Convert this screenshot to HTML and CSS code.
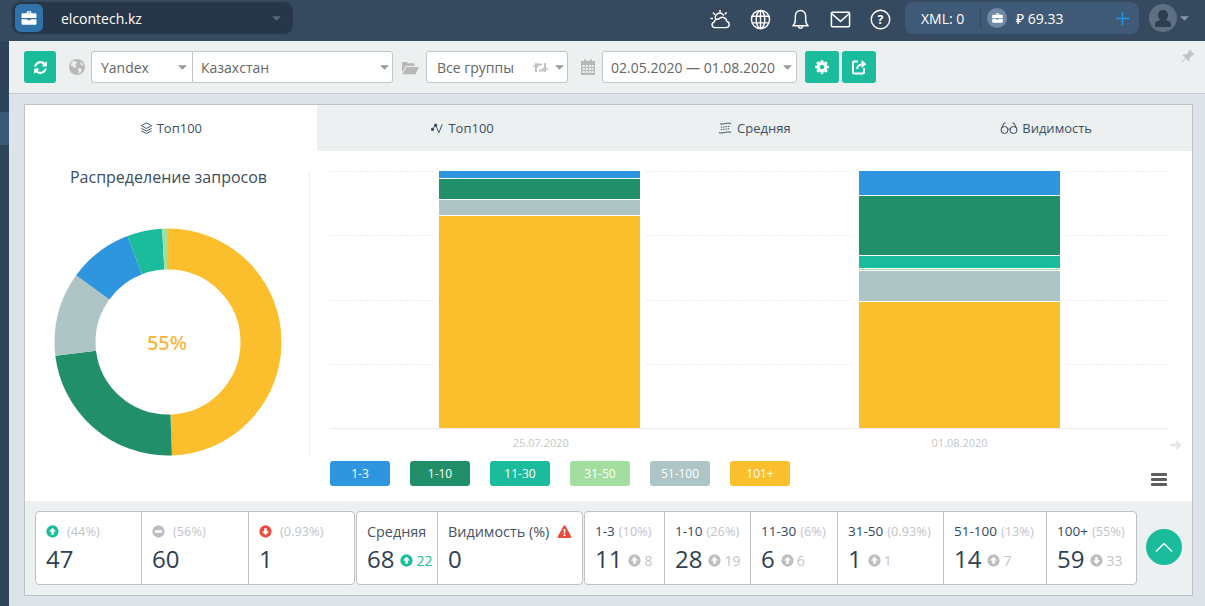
FILE: index.html
```html
<!DOCTYPE html>
<html lang="ru">
<head>
<meta charset="utf-8">
<title>elcontech.kz</title>
<link rel="stylesheet" href="styles.css">
</head>
<body>
<svg class="sprite" aria-hidden="true">
  <symbol id="c-up" viewBox="0 0 14 14"><circle cx="7" cy="7" r="6.6" fill="currentColor"/><path d="M7 3 3.2 7h2.4v3.6h2.8V7h2.4z" fill="#fff"/></symbol>
  <symbol id="c-down" viewBox="0 0 14 14"><circle cx="7" cy="7" r="6.6" fill="currentColor"/><path d="M7 11 3.2 7h2.4V3.4h2.8V7h2.4z" fill="#fff"/></symbol>
  <symbol id="c-minus" viewBox="0 0 14 14"><circle cx="7" cy="7" r="6.6" fill="currentColor"/><rect x="3.2" y="5.6" width="7.6" height="2.8" fill="#fff"/></symbol>
  <symbol id="case" viewBox="0 0 20 18"><path d="M7 3V1.6C7 .9 7.6.4 8.2.4h3.6c.6 0 1.2.5 1.2 1.2V3h5c.9 0 1.6.7 1.6 1.6V9H.4V4.6C.4 3.700 1.100 3 2 3zm1.500 0h3V1.900h-3zM.4 10.500h7.600V12h4v-1.500h7.600v5.500c0 .9-.7 1.600-1.600 1.600H2c-.9 0-1.600-.7-1.600-1.600z" fill="currentColor"/></symbol>
  <symbol id="caret" viewBox="0 0 10 5"><path d="M0 0h10L5 5z" fill="currentColor"/></symbol>
</svg>

<header class="topbar">
  <div class="account">
    <span class="account-logo"><svg class="i-case"><use href="#case"/></svg></span>
    <span class="account-name">elcontech.kz</span>
    <svg class="caret caret-dim"><use href="#caret"/></svg>
  </div>
  <nav class="top-icons">
    <svg class="ti" viewBox="0 0 22 22" fill="none" stroke="#fff" stroke-width="1.5" stroke-linecap="round" stroke-linejoin="round"><path d="M5.500 19.500h11.500a3.300 3.300 0 0 0 .6-6.500 4.600 4.600 0 0 0-8.400-2.300 3.700 3.700 0 0 0-4.900 3.100 2.900 2.900 0 0 0 .7 5.700z"/><path d="M5.800 10.300a4.600 4.600 0 0 1 8.200-3.900M10.500 1.500v1.800M3.500 4.200l1.300 1.300M17 4l-1.200 1.300M1 10h1.600"/></svg>
    <svg class="ti" viewBox="0 0 22 22" fill="none" stroke="#fff" stroke-width="1.500"><circle cx="11" cy="11" r="9.500"/><ellipse cx="11" cy="11" rx="4.500" ry="9.500"/><path d="M11 1.500v19M2.200 7.500h17.600M2.200 14.500h17.600"/></svg>
    <svg class="ti" viewBox="0 0 22 22" fill="none" stroke="#fff" stroke-width="1.500" stroke-linejoin="round"><path d="M3 17.500c1.500-1.200 2.600-2.800 2.600-6.500V7a5.400 5.400 0 0 1 10.800 0v4c0 3.700 1.100 5.300 2.600 6.500z"/><path d="M9 18a2 2 0 0 0 4 0"/></svg>
    <svg class="ti" viewBox="0 0 22 22" fill="none" stroke="#fff" stroke-width="1.600" stroke-linejoin="round"><rect x="1.500" y="3.500" width="19" height="15" rx="1"/><path d="m2 5 9 8 9-8"/></svg>
    <svg class="ti" viewBox="0 0 22 22"><circle cx="11" cy="11" r="9.700" fill="none" stroke="#fff" stroke-width="1.500"/><text x="11" y="15.500" text-anchor="middle" class="q-mark">?</text></svg>
  </nav>
  <div class="balance">
    <span class="xml">XML: 0</span>
    <span class="balance-sep"></span>
    <span class="balance-icon"><svg class="i-case-small"><use href="#case"/></svg></span>
    <span class="rub">₽ 69.33</span>
    <svg class="plus" viewBox="0 0 13 13"><path d="M6.500 0v13M0 6.500h13" stroke="#2196e8" stroke-width="1.500"/></svg>
  </div>
  <div class="avatar">
    <svg viewBox="0 0 28 28" class="avatar-pic"><circle cx="14" cy="14" r="14" fill="#5e6f84"/><path d="M14 6c3 0 5 2.300 5 5.400 0 2-.9 3.700-2.200 4.700 3 .7 5.200 2 5.200 4.200V23H6v-2.700c0-2.200 2.200-3.500 5.200-4.200A5.800 5.800 0 0 1 9 11.400C9 8.300 11 6 14 6z" fill="#2c3e50"/></svg>
    <svg class="caret caret-avatar"><use href="#caret"/></svg>
  </div>
</header>

<div class="shell">
  <aside class="rail"><span class="rail-top"></span><span class="rail-active"></span></aside>
  <main class="main">
    <section class="toolbar">
      <button class="btn btn-first" type="button"><svg class="btn-i" viewBox="0 0 1792 1792"><path fill="#fff" d="M1639 1056q0 5-1 7-64 268-268 434.500t-478 166.500q-146 0-282.500-55t-243.500-157l-129 129q-19 19-45 19t-45-19-19-45v-448q0-26 19-45t45-19h448q26 0 45 19t19 45-19 45l-137 137q71 66 161 102t187 36q134 0 250-65t186-179q11-17 53-117 8-23 30-23h192q13 0 22.500 9.500t9.500 22.500zm25-800v448q0 26-19 45t-45 19h-448q-26 0-45-19t-19-45 19-45l138-138q-148-137-349-137-134 0-250 65t-186 179q-11 17-53 117-8 23-30 23h-199q-13 0-22.500-9.500t-9.500-22.500v-7q65-268 270-434.500t480-166.500q146 0 284 55.500t245 156.500l130-129q19-19 45-19t45 19 19 45z"/></svg></button>
      <svg class="tool-i i-globe" viewBox="0 0 16 16"><circle cx="8" cy="8" r="8" fill="#b8b8b8"/><path d="M3 2.500 6.500 2 8 3.500 6.500 5.500 7.500 7 5.500 9.500 3.500 7 1.500 6.500zM9 9l3 .5 1 1.500-2 3.500-1.500-1zM11 2.500l2.500 2 .5 2.500-2-1z" fill="#ececec"/></svg>
      <div class="select-group">
        <div class="select sel-engine"><span>Yandex</span><svg class="caret caret-sel"><use href="#caret"/></svg></div>
        <div class="select sel-region"><span>Казахстан</span><svg class="caret caret-sel"><use href="#caret"/></svg></div>
      </div>
      <svg class="tool-i i-folder" viewBox="0 0 18 14"><path d="M0 12V2c0-.8.600-1.400 1.300-1.400h3.500c.7 0 1.200.6 1.200 1.400h6c.8 0 1.300.6 1.300 1.400V5H4L0 12z" fill="#b8b8b8"/><path d="M4.600 6H18l-3.600 7.500H.6z" fill="#b8b8b8"/></svg>
      <div class="select sel-group">
        <span>Все группы</span>
        <svg class="i-retweet" viewBox="0 0 15 11" fill="none" stroke="#c2c2c2" stroke-width="2"><path d="M3 10V2.500h6M12 1v7.500H6"/><path d="M.5 5 3 2l2.500 3M9.500 6l2.500 3 2.500-3" stroke-width="1.500"/></svg>
        <svg class="caret caret-sel"><use href="#caret"/></svg>
      </div>
      <svg class="tool-i i-cal" viewBox="0 0 14 16"><path d="M1 2h2V.5h2V2h4V.5h2V2h2c.6 0 1 .4 1 1v12c0 .6-.4 1-1 1H1c-.6 0-1-.4-1-1V3c0-.6.4-1 1-1z" fill="#b8b8b8"/><path d="M1.500 6h2.300v2H1.500zM4.700 6H7v2H4.700zM8 6h2.300v2H8zM11 6h1.500v2H11zM1.500 9h2.300v2H1.500zM4.700 9H7v2H4.700zM8 9h2.300v2H8zM11 9h1.500v2H11zM1.500 12h2.300v2H1.500zM4.700 12H7v2H4.700zM8 12h2.300v2H8zM11 12h1.500v2H11z" fill="#ecf0f1"/></svg>
      <div class="select sel-date"><span>02.05.2020 — 01.08.2020</span><svg class="caret caret-sel"><use href="#caret"/></svg></div>
      <button class="btn btn-gear" type="button"><svg class="btn-i-gear" viewBox="0 0 1792 1792"><path fill="#fff" d="M1152 896q0-106-75-181t-181-75-181 75-75 181 75 181 181 75 181-75 75-181zm512-109v222q0 12-8 23t-20 13l-185 28q-19 54-39 91 35 50 107 138 10 12 10 25t-9 23q-27 37-99 108t-94 71q-12 0-26-9l-138-108q-44 23-91 38-16 136-29 186-7 28-36 28h-222q-14 0-24.500-8.500t-11.500-21.500l-28-184q-49-16-90-37l-141 107q-10 9-25 9-14 0-25-11-126-114-165-168-7-10-7-23 0-12 8-23 15-21 51-66.500t54-70.500q-27-50-41-99l-183-27q-13-2-21-12.500t-8-23.500v-222q0-12 8-23t19-13l186-28q14-46 39-92-40-57-107-138-10-12-10-24 0-10 9-23 26-36 98.500-107.500t94.500-71.500q13 0 26 10l138 107q44-23 91-38 16-136 29-186 7-28 36-28h222q14 0 24.500 8.500t11.500 21.500l28 184q49 16 90 37l142-107q9-9 24-9 13 0 25 10 129 119 165 170 7 8 7 22 0 12-8 23-15 21-51 66.500t-54 70.500q26 50 41 98l183 28q13 2 21 12.500t8 23.500z"/></svg></button>
      <button class="btn btn-export" type="button"><svg class="btn-i-lg" viewBox="0 0 16 16" fill="none" stroke="#fff" stroke-width="2"><path d="M7 2.500H3a1 1 0 0 0-1 1v10a1 1 0 0 0 1 1h9a1 1 0 0 0 1-1V9"/><path d="M6 10c.4-2.800 2.500-4.500 6-4.700" stroke-width="2"/><path d="M10.500 1 15.500 5l-5 4z" fill="#fff" stroke="none"/></svg></button>
      <svg class="i-pin" viewBox="0 0 14 14"><path d="M8.500.5 13.500 5.500 12.500 6.500 11.500 6 8.500 9l.3 2.500-1 1L5 9.700 1 13.500.5 13 4.300 9 1.500 6.200l1-1L5 5.500 8 2.500 7.500 1.500z" fill="#bfc5c9"/></svg>
    </section>

    <section class="panel">
      <div class="tabs">
        <div class="tab tab-active"><svg class="tab-i" viewBox="0 0 14 14" fill="none" stroke="#34495e" stroke-width="1"><path d="M7 1 1.500 4 7 7l5.500-3z"/><path d="M1.500 6.800 7 9.800l5.500-3M1.500 9.500 7 12.500l5.500-3"/></svg>Топ100</div>
        <div class="tab"><svg class="tab-i" viewBox="0 0 14 14" fill="none" stroke="#34495e" stroke-width="1"><path d="M1.500 8 5 3.500 8.500 11.500 12 2.500"/><circle cx="1.600" cy="8" r="1.300" fill="#34495e"/><circle cx="5" cy="3.500" r="1.300" fill="#34495e"/></svg>Топ100</div>
        <div class="tab"><svg class="tab-i tab-i-wide" viewBox="0 0 16 14" fill="none" stroke="#34495e" stroke-width="1"><path d="M2 2.500c3 1.500 7-1.500 12-.5" /><path d="M3 6c3 .5 6-1 10-.5" stroke-dasharray="1.500 1"/><path d="M3 8.500c3 .5 6-1 10-.5" stroke-dasharray="1.500 1"/><path d="M1 12c4 1.500 8-2 13-.5"/></svg>Средняя</div>
        <div class="tab"><svg class="tab-i tab-i-glass" viewBox="0 0 18 14" fill="none" stroke="#34495e" stroke-width="1"><circle cx="4.500" cy="9" r="3.500"/><circle cx="13.500" cy="9" r="3.500"/><path d="M8 8.500c.6-.6 1.400-.6 2 0M1.200 8 4 2h1.500M16.800 8 14 2h-1.500"/></svg>Видимость</div>
      </div>

      <div class="chart-area">
        <div class="donut-col">
          <h2 class="donut-title">Распределение запросов</h2>
          <div class="donut-wrap">
            <svg class="donut" viewBox="0 0 228 228" fill="none" stroke-width="41">
              <g transform="rotate(-90 114 114)">
                <circle cx="114" cy="114" r="93" pathLength="360" stroke="#fbbe2c" stroke-dasharray="178 182"/>
                <circle cx="114" cy="114" r="93" pathLength="360" stroke="#21906a" stroke-dasharray="85 275" stroke-dashoffset="-178"/>
                <circle cx="114" cy="114" r="93" pathLength="360" stroke="#aec5c5" stroke-dasharray="43 317" stroke-dashoffset="-263"/>
                <circle cx="114" cy="114" r="93" pathLength="360" stroke="#2e95df" stroke-dasharray="33 327" stroke-dashoffset="-306"/>
                <circle cx="114" cy="114" r="93" pathLength="360" stroke="#1abc9c" stroke-dasharray="18 342" stroke-dashoffset="-339"/>
                <circle cx="114" cy="114" r="93" pathLength="360" stroke="#a3de9e" stroke-dasharray="3 357" stroke-dashoffset="-357"/>
              </g>
            </svg>
            <span class="donut-value">55%</span>
          </div>
        </div>
        <div class="bars-col">
          <div class="plot">
            <div class="gridlines"><i></i><i></i><i></i><i></i></div>
            <div class="bar">
              <span class="seg c-blue" style="height:7px"></span>
              <span class="seg c-green" style="height:20px"></span>
              <span class="seg c-grey" style="height:15px"></span>
              <span class="seg c-yellow" style="height:212px"></span>
            </div>
            <div class="bar">
              <span class="seg c-blue" style="height:24px"></span>
              <span class="seg c-green" style="height:59px"></span>
              <span class="seg c-teal" style="height:12px"></span>
              <span class="seg c-light" style="height:1px"></span>
              <span class="seg c-grey" style="height:30px"></span>
              <span class="seg c-yellow" style="height:126px"></span>
            </div>
          </div>
          <div class="x-labels"><span>25.07.2020</span><span>01.08.2020</span>
            <svg class="x-arrow" viewBox="0 0 12 12"><path d="M6.500 1 11.500 6l-5 5-1.500-1.500L7 7.200H.5V4.800H7L5 2.500z" fill="#e4e6e8"/></svg>
          </div>
          <div class="legend-row">
            <div class="legend">
              <span class="leg c-blue">1-3</span>
              <span class="leg c-green">1-10</span>
              <span class="leg c-teal">11-30</span>
              <span class="leg c-light">31-50</span>
              <span class="leg c-grey">51-100</span>
              <span class="leg c-yellow">101+</span>
            </div>
            <div class="burger"><i></i><i></i><i></i></div>
          </div>
        </div>
      </div>

      <div class="stats">
        <div class="card card-a">
          <div class="cell"><div class="st-label"><svg class="ci ci-first green"><use href="#c-up"/></svg><span class="pct">(44%)</span></div><div class="st-num">47</div></div>
          <div class="cell"><div class="st-label"><svg class="ci ci-first silver"><use href="#c-minus"/></svg><span class="pct">(56%)</span></div><div class="st-num">60</div></div>
          <div class="cell"><div class="st-label"><svg class="ci ci-first red"><use href="#c-down"/></svg><span class="pct">(0.93%)</span></div><div class="st-num">1</div></div>
        </div>
        <div class="card card-b">
          <div class="cell"><div class="st-label st-text">Средняя</div><div class="st-num">68<svg class="ci green"><use href="#c-up"/></svg><span class="delta delta-green">22</span></div></div>
          <div class="cell"><div class="st-label st-text">Видимость (%)<svg class="warn" viewBox="0 0 14 13"><path d="M7 .3c.4 0 .7.2.9.5l5.900 10.600c.4.700-.1 1.500-.9 1.500H1.100c-.8 0-1.300-.8-.9-1.500L6.100.8C6.300.5 6.600.3 7 .3z" fill="#e74c3c"/><path d="M6.100 4h1.800l-.2 4.500H6.300zM6.100 9.400h1.800v1.700H6.100z" fill="#fff"/></svg></div><div class="st-num">0</div></div>
        </div>
        <div class="card card-c">
          <div class="cell"><div class="st-label"><b>1-3</b> <span class="pct">(10%)</span></div><div class="st-num">11<svg class="ci silver"><use href="#c-up"/></svg><span class="delta">8</span></div></div>
          <div class="cell"><div class="st-label"><b>1-10</b> <span class="pct">(26%)</span></div><div class="st-num">28<svg class="ci silver"><use href="#c-up"/></svg><span class="delta">19</span></div></div>
          <div class="cell"><div class="st-label"><b>11-30</b> <span class="pct">(6%)</span></div><div class="st-num">6<svg class="ci silver"><use href="#c-up"/></svg><span class="delta">6</span></div></div>
          <div class="cell"><div class="st-label"><b>31-50</b> <span class="pct">(0.93%)</span></div><div class="st-num">1<svg class="ci silver"><use href="#c-up"/></svg><span class="delta">1</span></div></div>
          <div class="cell"><div class="st-label"><b>51-100</b> <span class="pct">(13%)</span></div><div class="st-num">14<svg class="ci silver"><use href="#c-up"/></svg><span class="delta">7</span></div></div>
          <div class="cell"><div class="st-label"><b>100+</b> <span class="pct">(55%)</span></div><div class="st-num">59<svg class="ci silver"><use href="#c-down"/></svg><span class="delta">33</span></div></div>
        </div>
        <button class="round-up" type="button"><svg viewBox="0 0 18 10" fill="none" stroke="#fff" stroke-width="1.400"><path d="M1 9.500 9 1.500l8 8"/></svg></button>
      </div>
    </section>
  </main>
</div>
</body>
</html>
```
FILE: styles.css
```css
* { box-sizing: border-box; }
html, body { margin: 0; height: 100%; }
body {
  width: 1205px;
  height: 606px;
  overflow: hidden;
  background: #dce4e9;
  font-family: "Open Sans", "Noto Sans", sans-serif;
  color: #34495e;
  display: flex;
  flex-direction: column;
}
.sprite { display: none; }
svg { display: block; flex: none; }

/* top bar */
.topbar {
  height: 41px;
  flex: none;
  background: #35495f;
  display: flex;
  align-items: flex-start;
  padding: 2px 0 0 12px;
}
.account {
  width: 281px;
  height: 32px;
  border-radius: 9px;
  background: #273649;
  display: flex;
  align-items: center;
  padding-left: 3px;
}
.account-logo {
  width: 28px;
  height: 28px;
  border-radius: 6px;
  background: #2f73aa;
  display: flex;
  align-items: center;
  justify-content: center;
  color: #fff;
}
.i-case { width: 16px; height: 14px; }
.account-name { margin-left: 18px; color: #fff; font-size: 14px; width: 211px; }
.caret { width: 10px; height: 5px; }
.caret-dim { color: #53677c; width: 9px; }
.top-icons { margin-left: 417px; display: flex; gap: 19px; padding-top: 7px; }
.ti { width: 21px; height: 21px; }
.q-mark { font: 700 13px "Open Sans", sans-serif; fill: #fff; }
.balance {
  margin-left: 14px;
  width: 234px;
  height: 32px;
  border-radius: 8px;
  background: #3f5a77;
  display: flex;
  align-items: center;
  color: #fff;
  font-size: 14px;
  padding-left: 16px;
}
.xml { width: 59px; }
.balance-sep { width: 1px; height: 22px; background: #34495e; }
.balance-icon {
  width: 20px;
  height: 20px;
  margin-left: 6px;
  border-radius: 50%;
  background: #7289a5;
  display: flex;
  align-items: center;
  justify-content: center;
  color: #fff;
}
.i-case-small { width: 11px; height: 10px; }
.rub { margin-left: 9px; width: 100px; }
.plus { width: 13px; height: 13px; }
.avatar { margin-left: 10px; display: flex; align-items: center; height: 32px; }
.avatar-pic { width: 28px; height: 28px; }
.caret-avatar { color: #8795a5; width: 9px; margin-left: 3px; }

/* shell */
.shell { flex: 1; display: flex; min-height: 0; }
.rail { width: 9px; flex: none; background: #2f4459; display: flex; flex-direction: column; }
.rail-top { height: 71px; background: #2c435b; }
.rail-active { height: 33px; background: #3a5878; }
.main { flex: 1; display: flex; flex-direction: column; min-width: 0; }

/* toolbar */
.toolbar {
  height: 53px;
  flex: none;
  background: #ecf0f1;
  border-bottom: 1px solid #c5cbce;
  display: flex;
  align-items: flex-start;
  padding: 10px 10px 0 15px;
}
.toolbar > * { flex: none; }
.btn {
  width: 32px;
  height: 32px;
  padding: 0;
  border: 0;
  border-radius: 3px;
  background: #1abc9c;
  display: flex;
  align-items: center;
  justify-content: center;
}
.btn-i { width: 15px; height: 15px; }
.btn-i-gear { width: 16px; height: 16px; }
.btn-i-lg { width: 16px; height: 16px; }
.tool-i { margin-top: 8px; }
.i-globe { width: 16px; height: 16px; margin-left: 13px; }
.select-group { margin-left: 6px; width: 302px; display: flex; }
.select {
  height: 32px;
  background: #fff;
  border: 1px solid #c2c6c9;
  border-radius: 3px;
  font-size: 14px;
  color: #666;
  display: flex;
  align-items: center;
}
.sel-engine { width: 101px; padding: 0 5px 0 9px; justify-content: space-between; border-radius: 3px 0 0 3px; border-right: 0; }
.sel-region { width: 201px; padding: 0 3px 0 8px; justify-content: space-between; border-radius: 0 3px 3px 0; }
.caret-sel { color: #9a9a9a; width: 9px; }
.i-folder { width: 17px; height: 14px; margin: 10px 0 0 9px; }
.sel-group { width: 142px; margin-left: 7px; padding: 0 3px 0 10px; }
.sel-group span { width: 97px; }
.i-retweet { width: 15px; height: 11px; margin-right: 7px; }
.i-cal { width: 14px; height: 16px; margin-left: 13px; }
.sel-date { width: 195px; margin-left: 7px; padding: 0 4px 0 8px; justify-content: space-between; }
.btn-gear { width: 34px; margin-left: 8px; }
.btn-export { width: 34px; margin-left: 3px; }
.i-pin { width: 14px; height: 14px; margin: -2px 0 0 auto; }

/* panel */
.panel {
  margin: 10px 12px 0 15px;
  height: 492px;
  border: 1px solid #bcc2c6;
  background: #fff;
  display: flex;
  flex-direction: column;
}
.tabs { height: 46px; flex: none; display: grid; grid-template-columns: repeat(4, 1fr); background: #ecf0f1; }
.tab {
  display: flex;
  align-items: center;
  justify-content: center;
  gap: 4px;
  font-size: 13px;
  font-weight: 500;
  color: #3c4f62;
}
.tab-active { background: #fff; }
.tab-i { width: 13px; height: 13px; }
.tab-i-wide { width: 15px; height: 14px; }
.tab-i-glass { width: 18px; height: 14px; }

.chart-area { height: 350px; flex: none; display: flex; }
.donut-col { width: 285px; flex: none; position: relative; padding-top: 15px; }
.donut-col::after {
  content: "";
  position: absolute;
  right: 0;
  top: 20px;
  height: 284px;
  width: 1px;
  background: #efefef;
}
.donut-title { margin: 0; padding-left: 2px; font-size: 16px; font-weight: 400; text-align: center; line-height: 22px; color: #3d4d62; }
.donut-wrap { position: relative; width: 228px; height: 228px; margin: 40px 0 0 29px; }
.donut { width: 228px; height: 228px; }
.donut-value {
  position: absolute;
  inset: 0;
  padding-right: 2px;
  display: flex;
  align-items: center;
  justify-content: center;
  font-size: 20px;
  font-weight: 600;
  color: #f5b949;
}

.bars-col { flex: 1; padding: 20px 23px 0 20px; min-width: 0; position: relative; }
.plot {
  position: relative;
  height: 258px;
  border-bottom: 1px solid #eaeaea;
  display: grid;
  grid-template-columns: 1fr 1fr;
  justify-items: center;
}
.gridlines { position: absolute; inset: 0; display: flex; flex-direction: column; }
.gridlines i { display: block; height: 64.500px; border-top: 1px dashed #eee; }
.bar {
  position: relative;
  width: 213px;
  padding: 0 6px;
  background: #fff;
  display: flex;
  flex-direction: column;
  gap: 1px;
}
.seg { display: block; flex: none; }
.c-blue { background: #2e95df; }
.c-green { background: #21906a; }
.c-teal { background: #1abc9c; }
.c-light { background: #a3de9e; }
.c-grey { background: #aec5c5; }
.c-yellow { background: #fbbe2c; }

.x-labels {
  position: relative;
  height: 32px;
  padding: 6px 0 0 1.500px;
  display: grid;
  grid-template-columns: 1fr 1fr;
  justify-items: center;
  font-size: 11px;
  line-height: 16px;
  color: #c4c7ca;
}
.x-arrow { position: absolute; right: -13px; top: 10px; width: 12px; height: 12px; }
.legend-row { display: flex; justify-content: space-between; align-items: flex-end; padding-right: 2px; }
.legend { display: flex; gap: 20px; }
.leg {
  width: 60px;
  height: 25px;
  border-radius: 3px;
  color: #fff;
  font-size: 12px;
  display: flex;
  align-items: center;
  justify-content: center;
}
.burger { width: 16px; display: flex; flex-direction: column; gap: 2px; }
.burger i { display: block; height: 3px; border-radius: 1px; background: #5f5f5f; }

/* stats */
.stats {
  flex: 1;
  background: #ecf0f1;
  display: flex;
  align-items: flex-start;
  padding: 10px 0 0 10px;
  gap: 1px;
}
.card {
  height: 74px;
  background: #fff;
  border: 1px solid #bfc3c6;
  border-radius: 4px;
  display: grid;
}
.card-a { width: 320px; grid-template-columns: 105px 107px 1fr; }
.card-b { width: 227px; grid-template-columns: 80px 1fr; }
.card-c { width: 553px; grid-template-columns: 79px 86px 87px 106px 103px 1fr; }
.cell { padding: 9px 0 0 10px; border-left: 1px solid #bfc3c6; min-width: 0; white-space: nowrap; }
.cell:first-child { border-left: 0; }
.st-label { display: flex; align-items: center; height: 20px; font-size: 13.500px; color: #47535f; gap: 4px; }
.st-text { font-size: 14.400px; }
.st-label b { font-weight: 500; color: #34495e; }
.pct { font-size: 12.800px; color: #c2c5c8; }
.ci { width: 13px; height: 13px; }
.ci-first { margin-right: 4px; }
.green { color: #1abc9c; }
.silver { color: #bcbfc2; }
.red { color: #e74c3c; }
.st-num { display: flex; align-items: center; height: 34px; font-size: 24px; font-weight: 500; color: #2f4054; }
.st-num .ci { margin: 4px 3px 0 6px; }
.delta { font-size: 14px; font-weight: 400; color: #c2c5c8; margin-top: 4px; }
.delta-green { color: #1abc9c; }
.warn { width: 15px; height: 13px; margin-left: 4px; }
.round-up {
  width: 36px;
  height: 36px;
  margin: 18px 0 0 8px;
  padding: 0;
  border: 0;
  border-radius: 50%;
  background: #1abc9c;
  display: flex;
  align-items: center;
  justify-content: center;
}
.round-up svg { width: 18px; height: 10px; }
```
